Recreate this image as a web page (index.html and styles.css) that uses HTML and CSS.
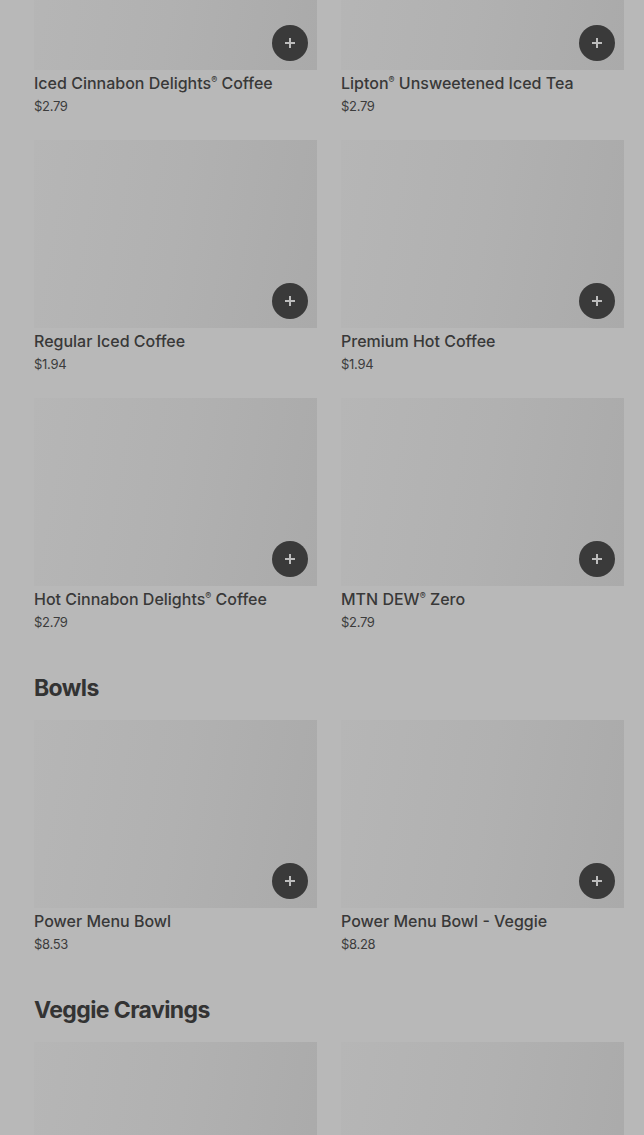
FILE: index.html
```html
<!DOCTYPE html>
<html>

<head>
    <title>Menu</title>
    <link rel="stylesheet" href="styles.css">
</head>

<body>
    <div class="page">
        <!-- Drinks -->
        <section class="menu-section">
            <div class="item-grid">
                <div class="item">
                    <div class="item-photo"><span class="add-btn"><svg viewBox="0 0 12 12"><path d="M6 1v10M1 6h10" /></svg></span></div>
                    <div class="item-name">Iced Cinnabon Delights<sup>®</sup> Coffee</div>
                    <div class="item-price">$2.79</div>
                </div>
                <div class="item">
                    <div class="item-photo"><span class="add-btn"><svg viewBox="0 0 12 12"><path d="M6 1v10M1 6h10" /></svg></span></div>
                    <div class="item-name">Lipton<sup>®</sup> Unsweetened Iced Tea</div>
                    <div class="item-price">$2.79</div>
                </div>
                <div class="item">
                    <div class="item-photo"><span class="add-btn"><svg viewBox="0 0 12 12"><path d="M6 1v10M1 6h10" /></svg></span></div>
                    <div class="item-name">Regular Iced Coffee</div>
                    <div class="item-price">$1.94</div>
                </div>
                <div class="item">
                    <div class="item-photo"><span class="add-btn"><svg viewBox="0 0 12 12"><path d="M6 1v10M1 6h10" /></svg></span></div>
                    <div class="item-name">Premium Hot Coffee</div>
                    <div class="item-price">$1.94</div>
                </div>
                <div class="item">
                    <div class="item-photo"><span class="add-btn"><svg viewBox="0 0 12 12"><path d="M6 1v10M1 6h10" /></svg></span></div>
                    <div class="item-name">Hot Cinnabon Delights<sup>®</sup> Coffee</div>
                    <div class="item-price">$2.79</div>
                </div>
                <div class="item">
                    <div class="item-photo"><span class="add-btn"><svg viewBox="0 0 12 12"><path d="M6 1v10M1 6h10" /></svg></span></div>
                    <div class="item-name">MTN DEW<sup>®</sup> Zero</div>
                    <div class="item-price">$2.79</div>
                </div>
            </div>
        </section>

        <!-- Bowls -->
        <section class="menu-section">
            <h2>Bowls</h2>
            <div class="item-grid">
                <div class="item">
                    <div class="item-photo"><span class="add-btn"><svg viewBox="0 0 12 12"><path d="M6 1v10M1 6h10" /></svg></span></div>
                    <div class="item-name">Power Menu Bowl</div>
                    <div class="item-price">$8.53</div>
                </div>
                <div class="item">
                    <div class="item-photo"><span class="add-btn"><svg viewBox="0 0 12 12"><path d="M6 1v10M1 6h10" /></svg></span></div>
                    <div class="item-name">Power Menu Bowl - Veggie</div>
                    <div class="item-price">$8.28</div>
                </div>
            </div>
        </section>

        <!-- Veggie Cravings (photos only, rest is below the fold) -->
        <section class="menu-section">
            <h2>Veggie Cravings</h2>
            <div class="item-grid">
                <div class="item">
                    <div class="item-photo"></div>
                </div>
                <div class="item">
                    <div class="item-photo"></div>
                </div>
            </div>
        </section>
    </div>
</body>

</html>
```

FILE: styles.css
```css
/* Page dimmed by modal backdrop */
body {
    margin: 0;
    background-color: #b8b8b8;
    font-family: Inter, "Noto Sans", sans-serif;
    color: #333333;
    overflow: hidden;
}
.page {
    padding: 0 20px 0 34px;
    margin-top: -118px;
}
.menu-section {
    margin-bottom: 41px;
}
.menu-section h2 {
    margin: 0 0 16px 0;
    font-size: 23px;
    line-height: 32px;
    font-weight: 700;
    letter-spacing: -0.6px;
    color: #333333;
}
.item-grid {
    display: grid;
    grid-template-columns: 1fr 1fr;
    column-gap: 24px;
    row-gap: 25px;
}
.item-photo {
    position: relative;
    height: 188px;
    background: linear-gradient(100deg, #b6b6b6 0%, #b1b1b1 50%, #aaaaaa 100%);
}
/* Add-to-cart button */
.add-btn {
    position: absolute;
    right: 9px;
    bottom: 9px;
    width: 36px;
    height: 36px;
    border-radius: 50%;
    background-color: #3a3a3a;
    display: flex;
    align-items: center;
    justify-content: center;
}
.add-btn svg {
    width: 12px;
    height: 12px;
    stroke: #bdbdbd;
    stroke-width: 2;
    fill: none;
}
.item-name {
    margin-top: 3px;
    font-size: 16px;
    line-height: 20px;
    font-weight: 500;
    color: #383838;
}
.item-name sup {
    font-size: 9px;
    vertical-align: 6px;
    line-height: 0;
}
.item-price {
    margin-top: 4px;
    font-size: 13px;
    line-height: 18px;
    color: #3c3c3c;
    letter-spacing: -0.3px;
}
```
